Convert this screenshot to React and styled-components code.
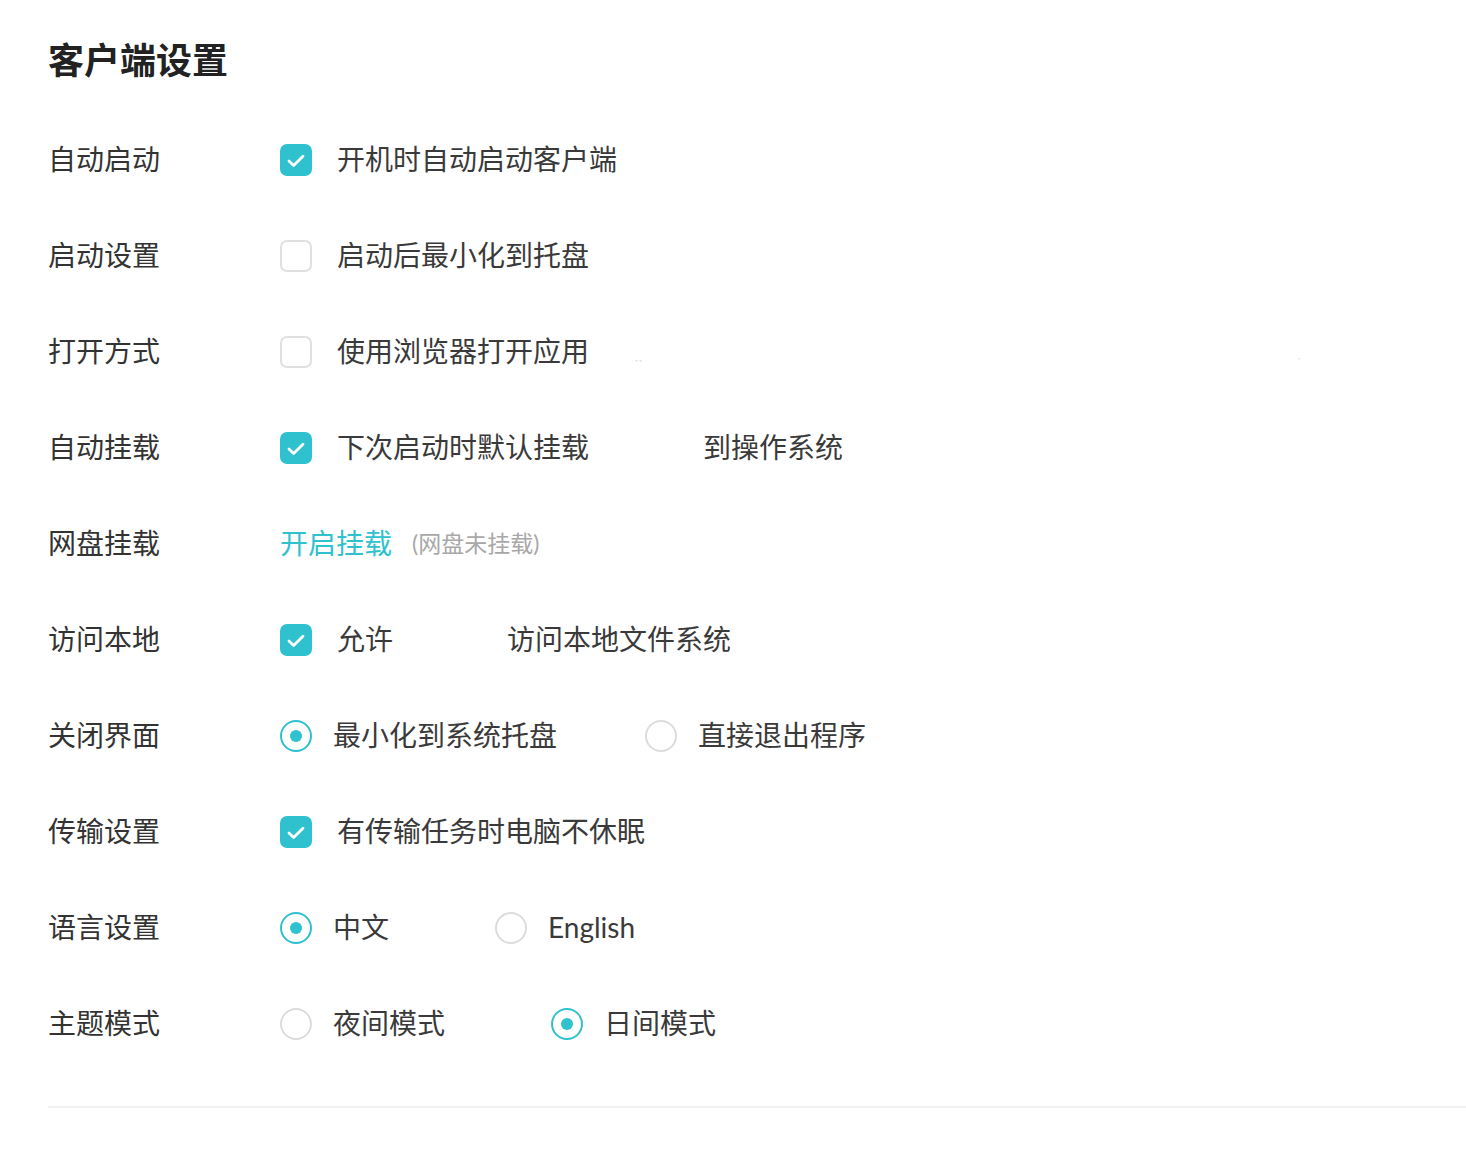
import React from "react";
import styled, { createGlobalStyle } from "styled-components";

const GlobalStyle = createGlobalStyle`
  html, body { margin: 0; padding: 0; background: #fff; }
  body {
    font-family: "Lato", "Noto Sans CJK SC", "Noto Sans", sans-serif;
    color: #333;
  }
`;

const TEAL = "#2fc1cd";

const Page = styled.div`
  padding: 36px 0 44px 48px;
  width: 1418px;
`;

const Title = styled.h1`
  margin: 0 0 28px;
  font-size: 36px;
  line-height: 48px;
  font-weight: 700;
  color: #222;
  letter-spacing: 0;
`;

const Rows = styled.div`
  display: flex;
  flex-direction: column;
`;

const Row = styled.div`
  display: grid;
  grid-template-columns: 232px 1fr;
  align-items: center;
  height: 96px;
`;

const Label = styled.div`
  font-size: 28px;
  line-height: 40px;
  color: #333;
  margin-top: -2px;
`;

const Controls = styled.div`
  display: flex;
  align-items: center;
  position: relative;
`;

const Option = styled.label`
  display: flex;
  align-items: center;
  margin-right: ${(p) => p.$gap || 0}px;
`;

const Box = styled.span`
  box-sizing: border-box;
  width: 32px;
  height: 32px;
  border-radius: 7px;
  flex: none;
  display: flex;
  align-items: center;
  justify-content: center;
  background: ${(p) => (p.$checked ? TEAL : "#fff")};
  border: ${(p) => (p.$checked ? "none" : "2px solid #e0e0e0")};
`;

const Circle = styled.span`
  box-sizing: border-box;
  width: 32px;
  height: 32px;
  border-radius: 50%;
  flex: none;
  display: flex;
  align-items: center;
  justify-content: center;
  border: 2px solid ${(p) => (p.$checked ? TEAL : "#dcdcdc")};
  &::after {
    content: "";
    width: 12px;
    height: 12px;
    border-radius: 50%;
    background: ${(p) => (p.$checked ? TEAL : "transparent")};
  }
`;

const Text = styled.span`
  font-size: 28px;
  line-height: 40px;
  color: #3a3a3a;
  margin-left: ${(p) => p.$offset ?? 25}px;
  margin-top: -2px;
  white-space: nowrap;
`;

const Spacer = styled.span`
  display: inline-block;
  width: ${(p) => p.$w}px;
  flex: none;
`;

const LinkText = styled.span`
  font-size: 28px;
  line-height: 40px;
  color: ${TEAL};
  cursor: pointer;
  margin-top: -2px;
`;

const Note = styled.span`
  font-size: 23px;
  line-height: 40px;
  color: #a8a8a8;
  margin-left: 20px;
  margin-top: -2px;
`;

const Speck = styled.span`
  position: absolute;
  top: 21px;
  left: ${(p) => p.$x}px;
  font-size: 8px;
  line-height: 8px;
  color: #cfcfcf;
`;

const Divider = styled.hr`
  border: none;
  height: 2px;
  background: #f2f2f2;
  margin: 34px 0 0;
`;

const Check = () => (
  <svg width="32" height="32" viewBox="0 0 32 32" fill="none">
    <path d="M9 17l4.6 4.4L23 12.2" stroke="#fff" strokeWidth="2.8" strokeLinecap="round" strokeLinejoin="round" />
  </svg>
);

const CheckOption = ({ checked, children, gap }) => (
  <Option $gap={gap}>
    <Box $checked={checked}>{checked && <Check />}</Box>
    <Text $offset={25}>{children}</Text>
  </Option>
);

const RadioOption = ({ checked, children, gap }) => (
  <Option $gap={gap}>
    <Circle $checked={checked} />
    <Text $offset={21}>{children}</Text>
  </Option>
);

export default function App() {
  return (
    <>
      <GlobalStyle />
      <Page>
        <Title>客户端设置</Title>
        <Rows>
          <Row>
            <Label>自动启动</Label>
            <Controls>
              <CheckOption checked>开机时自动启动客户端</CheckOption>
            </Controls>
          </Row>
          <Row>
            <Label>启动设置</Label>
            <Controls>
              <CheckOption>启动后最小化到托盘</CheckOption>
            </Controls>
          </Row>
          <Row>
            <Label>打开方式</Label>
            <Controls>
              <CheckOption>使用浏览器打开应用</CheckOption>
              <Speck $x={355}>、、</Speck>
              <Speck $x={1018}>·</Speck>
            </Controls>
          </Row>
          <Row>
            <Label>自动挂载</Label>
            <Controls>
              <CheckOption checked>下次启动时默认挂载</CheckOption>
              <Spacer $w={114} />
              <Text $offset={0}>到操作系统</Text>
            </Controls>
          </Row>
          <Row>
            <Label>网盘挂载</Label>
            <Controls>
              <LinkText>开启挂载</LinkText>
              <Note>(网盘未挂载)</Note>
            </Controls>
          </Row>
          <Row>
            <Label>访问本地</Label>
            <Controls>
              <CheckOption checked>允许</CheckOption>
              <Spacer $w={114} />
              <Text $offset={0}>访问本地文件系统</Text>
            </Controls>
          </Row>
          <Row>
            <Label>关闭界面</Label>
            <Controls>
              <RadioOption checked gap={88}>最小化到系统托盘</RadioOption>
              <RadioOption>直接退出程序</RadioOption>
            </Controls>
          </Row>
          <Row>
            <Label>传输设置</Label>
            <Controls>
              <CheckOption checked>有传输任务时电脑不休眠</CheckOption>
            </Controls>
          </Row>
          <Row>
            <Label>语言设置</Label>
            <Controls>
              <RadioOption checked gap={106}>中文</RadioOption>
              <RadioOption>English</RadioOption>
            </Controls>
          </Row>
          <Row>
            <Label>主题模式</Label>
            <Controls>
              <RadioOption gap={106}>夜间模式</RadioOption>
              <RadioOption checked>日间模式</RadioOption>
            </Controls>
          </Row>
        </Rows>
        <Divider />
      </Page>
    </>
  );
}
